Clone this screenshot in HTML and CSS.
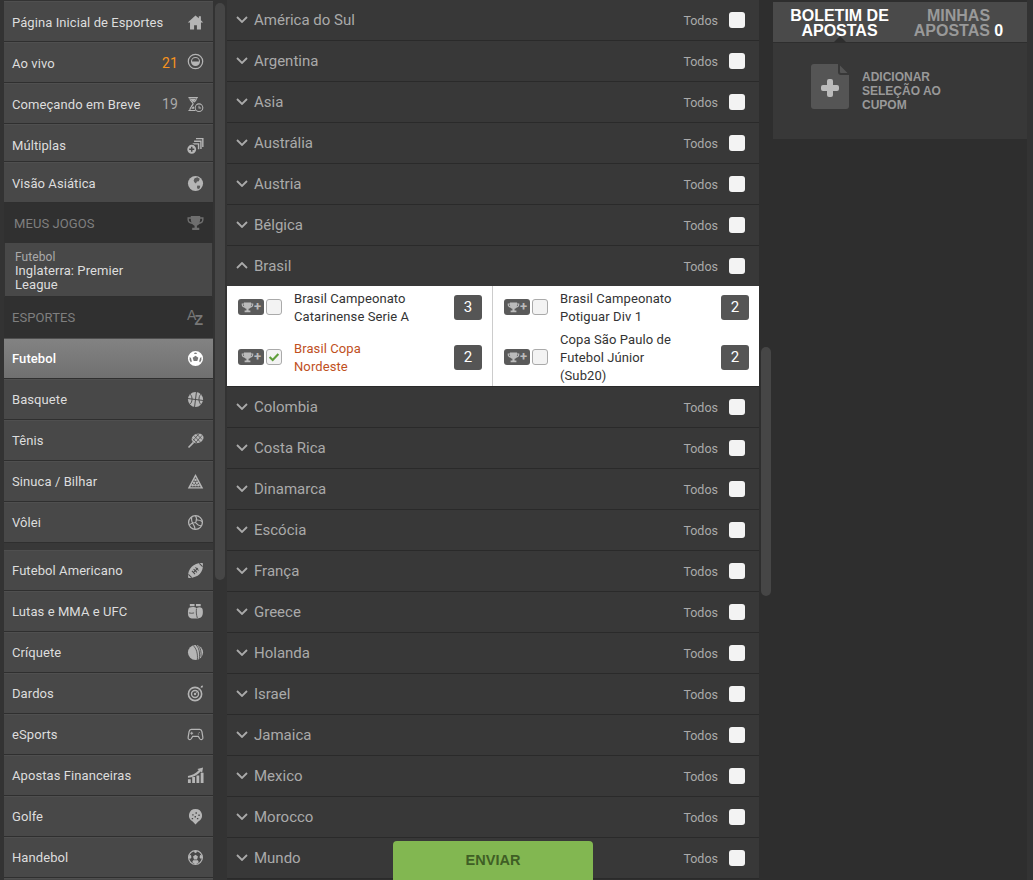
FILE: index.html
```html
<!DOCTYPE html>
<html lang="en">
<head>
  <meta charset="UTF-8" />
  <meta name="viewport" content="width=device-width, initial-scale=1.0" />
  <title>Apostas</title>
  <link rel="stylesheet" href="styles.css">
</head>
<body>
  <!-- Icon set -->
  <svg class="defs" width="0" height="0">
    <symbol id="i-home" viewBox="0 0 18 18"><path d="M9 1.500 .8 9h2.400v7.500h4.300v-4.500h3v4.500h4.300V9h2.400l-2.500-2.300V2.500h-2.200v2.100z"/></symbol>
    <symbol id="i-live" viewBox="0 0 18 18"><circle cx="9" cy="9" r="7.600" fill="none" stroke="currentColor" stroke-width="1.300"/><path fill-rule="evenodd" d="M9 4.200a4.800 4.800 0 1 0 0 9.600A4.800 4.800 0 0 0 9 4.200zm0 1.100A3.700 3.700 0 0 1 12.700 9H5.300A3.700 3.700 0 0 1 9 5.300z"/></symbol>
    <symbol id="i-soon" viewBox="0 0 18 18"><path d="M1.500 1h10v1.300h-10zM1.500 14.700h7.500V16H1.500z"/><path fill="none" stroke="currentColor" stroke-width="1.200" d="M3 2.300c0 3 3.500 4.200 3.500 6S3 11.700 3 14.700M10 2.300c0 2-1.500 3.200-2.500 4.300M6.500 8.300c-.5 1-1.500 2-2 3"/><path d="M3.800 3h5.400c-.3 1.500-1.800 2.600-2.700 3.500C5.600 5.600 4.100 4.500 3.800 3zM4.500 13.500c.5-1 1.300-2 2-2.700.4.400.8.800 1.100 1.300l-.2 1.400z"/><path fill-rule="evenodd" d="M12.700 7.800a4.600 4.600 0 1 0 0 9.200 4.600 4.600 0 0 0 0-9.200zm0 1.100a3.500 3.500 0 1 1 0 7 3.500 3.500 0 0 1 0-7zM12.200 10.300v2.900h2.700v-1h-1.700v-1.900z"/></symbol>
    <symbol id="i-multi" viewBox="0 0 18 18"><path d="M5.500 6.500h7.500v6.500h-1.500V8H7.500zM7.500 3.800h8v9h-1.500V5.300H7.500zM9.500 1h8v9.500H16V2.500H9.500z"/><path fill-rule="evenodd" d="M5 8.300a4.700 4.700 0 1 0 0 9.400 4.700 4.700 0 0 0 0-9.400zM4.200 10.300h1.600v1.900h1.900v1.600H5.800v1.900H4.200v-1.900H2.300v-1.600h1.900z"/></symbol>
    <symbol id="i-globe" viewBox="0 0 18 18"><circle cx="9" cy="9" r="8"/><path fill="#5a5a5a" d="M8 3.500l3-1 2.500 1.500-1 2.500-2 .5-1 2-1.500-1-1-2zM11 11l3 .5-.5 2.500-2 1-1-2z"/></symbol>
    <symbol id="i-trophy" viewBox="0 0 18 18"><path fill-rule="evenodd" d="M4 1h10v1.500h3.500V5c0 2.500-1.800 4.200-4.500 4.500-.700 1-1.500 1.500-2.500 1.800v2.200h2.500V16H5.500v-2.500H8v-2.200C7 11 6.200 10.500 5.500 9.500 2.500 9.200.5 7.500.5 5V2.500H4zM2 4v1c0 1.500 1 2.500 2.800 2.900C4.300 6.800 4 5.500 4 4zm12 0c0 1.500-.3 2.800-.8 3.900C15 7.500 16 6.500 16 5V4z"/></symbol>
    <symbol id="i-soccer" viewBox="0 0 18 18"><path fill-rule="evenodd" d="M9 1a8 8 0 1 0 0 16A8 8 0 0 0 9 1zm0 5 3 2.200-1.100 3.500H7.100L6 8.200zM2.800 7.500l1.400 1.100.9 3.200-.9 1.400A6.300 6.300 0 0 1 2.800 7.500zm12.400 0a6.300 6.300 0 0 1-1.400 5.700l-.9-1.400.9-3.200zM9 2.700l1.500.4v1L9 4.300l-1.500-.2v-1z"/></symbol>
    <symbol id="i-basket" viewBox="0 0 18 18"><circle cx="9" cy="9" r="8"/><path fill="none" stroke="#484848" stroke-width="1" d="M1 8l16 2M10 1 8 17M3.500 3.500C6 6 6 12 3 14M14.500 3.500C12 6 12 12 15 14.500"/></symbol>
    <symbol id="i-tennis" viewBox="0 0 18 18"><ellipse cx="11.200" cy="6.800" rx="6.400" ry="5" transform="rotate(-20 11.200 6.800)"/><path fill="none" stroke="#484848" stroke-width=".8" d="M7 3.500l7 7M9.500 1.500l6.500 6.500M6 7l5 5M13 1.500 6.500 9M16 3.500 9 11.500"/><path d="M6.200 10.200 7.600 11.600 2.200 17 1 15.800z"/></symbol>
    <symbol id="i-snooker" viewBox="0 0 18 18"><path fill-rule="evenodd" d="M9 1 .8 16.500h16.400zm0 3.200L14.500 15h-11z"/><circle cx="9" cy="7.500" r="1.300"/><circle cx="7.500" cy="10.300" r="1.300"/><circle cx="10.500" cy="10.300" r="1.300"/><circle cx="6" cy="13" r="1.300"/><circle cx="9" cy="13" r="1.300"/><circle cx="12" cy="13" r="1.300"/></symbol>
    <symbol id="i-volley" viewBox="0 0 18 18"><circle cx="9" cy="9" r="7.300" fill="none" stroke="currentColor" stroke-width="1.400"/><path fill="none" stroke="currentColor" stroke-width="1.200" d="M9 2c1.500 2.500 1.500 5 0 7-2.500 0-5 1-6.500 2.500M9 9c1.500 2 3.500 3.500 6.500 3.500M5 3c-.5 3 0 6 2 8.500 1 1.500 1.500 3 1.500 5M16 8c-2-1.500-4.500-2-7-1.500"/></symbol>
    <symbol id="i-football" viewBox="0 0 18 18"><path fill-rule="evenodd" d="M16.800 1.200c.6 4.300-.7 8.600-3.300 11.500-2.800 2.800-7.500 4.400-12.300 4.100C.7 12 2.200 7.700 5 5c2.900-2.800 7.400-4.300 11.800-3.800z"/><path fill="none" stroke="#484848" stroke-width="1.100" d="M6.500 11.500l5-5M7 7.500l3.500 3.500M9 5.800l3.200 3.200M5.200 9.500l3.300 3.300M13 1.500 16.500 5M1.500 13 5 16.500"/></symbol>
    <symbol id="i-gloves" viewBox="0 0 18 18"><path d="M3 1h5v2.500H3zM9.500 1h5v2.500h-5z"/><path d="M2 5c3-1 6.500-1 8 .5 2-1.500 4.500-1.500 6 0 1 1.500 1 5 .5 7-.5 2.500-3 4-5.500 3.800H5C2.500 16 1 14 1 11c0-2.500.2-4.500 1-6z"/><path fill="none" stroke="#484848" stroke-width=".9" d="M2 10.500c2 .5 4 .5 5.500 0M10 6c-.3 3-.3 6 1 10"/></symbol>
    <symbol id="i-cricket" viewBox="0 0 18 18"><circle cx="9" cy="9" r="8"/><path fill="none" stroke="#484848" stroke-width=".9" d="M9.500 1c3 3 4.500 7 3.500 15M12 1.500c2.500 3 3.300 7 2.800 12M6.500 1.500c3.500 3.500 5 8 4.500 15.300"/></symbol>
    <symbol id="i-target" viewBox="0 0 18 18"><circle cx="8.500" cy="9.500" r="7" fill="none" stroke="currentColor" stroke-width="1.700"/><circle cx="8.500" cy="9.500" r="3.700" fill="none" stroke="currentColor" stroke-width="1.500"/><circle cx="8.500" cy="9.500" r="1.300"/><path d="M8.500 9 14.500 3l.3-2 2.200-.5-.5 2.200-2 .3-5.500 6.500z"/></symbol>
    <symbol id="i-pad" viewBox="0 0 18 18"><path fill="none" stroke="currentColor" stroke-width="1.300" d="M4.500 3.500h9c1.500 0 2 1 2.300 2.500l1 6c.4 2.500-2.300 3-3.300 1.500L12 11H6l-1.500 2.500C3.500 15 .8 14.500 1.200 12l1-6C2.500 4.500 3 3.500 4.500 3.500z"/><path d="M4.500 6.200h1v1h1v1h-1v1h-1v-1h-1v-1h1zM12.500 6.500h1v1h-1zM11.500 8h1v1h-1z"/></symbol>
    <symbol id="i-chart" viewBox="0 0 18 18"><path d="M1 13h3v4H1zM5.500 10.500h3V17h-3zM10 9h3v8h-3zM14.500 6h3v11h-3z"/><path d="M1 9.500c4-.5 8-2.500 11.500-6L11 2 17 .5 16 6l-1.500-1.300C11 8.500 6 11 1 11.500z"/></symbol>
    <symbol id="i-golf" viewBox="0 0 18 18"><path fill-rule="evenodd" d="M9 1a7 7 0 0 1 3 13.300L9 17.500l-3-3.200A7 7 0 0 1 9 1z"/><path fill="#484848" d="M5.500 6.500h1.500V8H5.500zM9 4.500h1.500V6H9zM12 7h1.500v1.500H12zM8 8.500h1.500V10H8zM5 10.500h1.500V12H5zM10.500 10.500H12V12h-1.500z"/></symbol>
    <symbol id="i-hand" viewBox="0 0 18 18"><circle cx="9" cy="9" r="7.300" fill="none" stroke="currentColor" stroke-width="1.300"/><path d="M9 6l2.600 1.900-1 3.100H7.400l-1-3.100zM9 1.500l2 1.500L9 4.500 7 3zM2 7l2.200-.6.500 2.500-1.500 1.800L1.800 9.500zM16 7l-2.200-.6-.5 2.500 1.500 1.800 1-1.200zM5.500 14l1-2h5l1 2L9 16.500z"/></symbol>
    <symbol id="i-chev" viewBox="0 0 12 7"><path fill="none" stroke="currentColor" stroke-width="1.800" d="M1 1l5 5 5-5"/></symbol>
    <symbol id="i-cup" viewBox="0 0 18 18"><path fill-rule="evenodd" d="M4 2h10v1.500h3v1.800c0 2.200-1.600 3.600-4 3.900-.6.900-1.400 1.500-2.500 1.700V13H13v2.500H5V13h2.500v-2.100C6.400 10.700 5.600 10.100 5 9.200c-2.400-.3-4-1.700-4-3.900V3.500h3zM2.500 5c0 1.200.8 2 2 2.400C4.200 6.700 4 5.900 4 5zM14 5c0 .9-.2 1.700-.5 2.400 1.200-.4 2-1.200 2-2.400z"/></symbol>
  </svg>

  <div class="page">
    <!-- Left menu -->
    <div class="side">
      <nav class="menu">
        <a class="item item-top"><span class="name">Página Inicial de Esportes</span><svg class="ico"><use href="#i-home"/></svg></a>
        <a class="item item-top"><span class="name">Ao vivo</span><span class="num live">21</span><svg class="ico ico-up"><use href="#i-live"/></svg></a>
        <a class="item item-top"><span class="name">Começando em Breve</span><span class="num">19</span><svg class="ico"><use href="#i-soon"/></svg></a>
        <a class="item item-short"><span class="name">Múltiplas</span><svg class="ico"><use href="#i-multi"/></svg></a>
        <a class="item item-top"><span class="name">Visão Asiática</span><svg class="ico"><use href="#i-globe"/></svg></a>
        <div class="head"><span class="name">MEUS JOGOS</span><svg class="ico"><use href="#i-trophy"/></svg></div>
        <div class="fav">
          <small>Futebol</small>
          <span>Inglaterra: Premier League</span>
        </div>
        <div class="head head-sports"><span class="name">ESPORTES</span><span class="az"><span>A</span><span>Z</span></span></div>
        <a class="item active"><span class="name">Futebol</span><svg class="ico"><use href="#i-soccer"/></svg></a>
        <a class="item"><span class="name">Basquete</span><svg class="ico"><use href="#i-basket"/></svg></a>
        <a class="item"><span class="name">Tênis</span><svg class="ico"><use href="#i-tennis"/></svg></a>
        <a class="item"><span class="name">Sinuca / Bilhar</span><svg class="ico"><use href="#i-snooker"/></svg></a>
        <a class="item"><span class="name">Vôlei</span><svg class="ico"><use href="#i-volley"/></svg></a>
        <div class="gap"></div>
        <a class="item"><span class="name">Futebol Americano</span><svg class="ico"><use href="#i-football"/></svg></a>
        <a class="item"><span class="name">Lutas e MMA e UFC</span><svg class="ico"><use href="#i-gloves"/></svg></a>
        <a class="item"><span class="name">Críquete</span><svg class="ico"><use href="#i-cricket"/></svg></a>
        <a class="item"><span class="name">Dardos</span><svg class="ico"><use href="#i-target"/></svg></a>
        <a class="item"><span class="name">eSports</span><svg class="ico"><use href="#i-pad"/></svg></a>
        <a class="item"><span class="name">Apostas Financeiras</span><svg class="ico"><use href="#i-chart"/></svg></a>
        <a class="item"><span class="name">Golfe</span><svg class="ico"><use href="#i-golf"/></svg></a>
        <a class="item"><span class="name">Handebol</span><svg class="ico"><use href="#i-hand"/></svg></a>
        <a class="item"></a>
      </nav>
      <div class="track"><div class="thumb thumb-menu"></div></div>
    </div>

    <!-- Country list -->
    <main class="list">
      <div class="row"><svg class="chev"><use href="#i-chev"/></svg><span class="country">América do Sul</span><span class="all">Todos</span><span class="box"></span></div>
      <div class="row"><svg class="chev"><use href="#i-chev"/></svg><span class="country">Argentina</span><span class="all">Todos</span><span class="box"></span></div>
      <div class="row"><svg class="chev"><use href="#i-chev"/></svg><span class="country">Asia</span><span class="all">Todos</span><span class="box"></span></div>
      <div class="row"><svg class="chev"><use href="#i-chev"/></svg><span class="country">Austrália</span><span class="all">Todos</span><span class="box"></span></div>
      <div class="row"><svg class="chev"><use href="#i-chev"/></svg><span class="country">Austria</span><span class="all">Todos</span><span class="box"></span></div>
      <div class="row"><svg class="chev"><use href="#i-chev"/></svg><span class="country">Bélgica</span><span class="all">Todos</span><span class="box"></span></div>
      <div class="row row-open"><svg class="chev chev-up"><use href="#i-chev"/></svg><span class="country">Brasil</span><span class="all">Todos</span><span class="box"></span></div>

      <div class="leagues">
        <div class="league">
          <span class="cup"><svg><use href="#i-cup"/></svg><b>+</b></span><span class="box box-line"></span>
          <span class="league-name">Brasil Campeonato Catarinense Serie A</span>
          <span class="count">3</span>
        </div>
        <div class="league league-right">
          <span class="cup"><svg><use href="#i-cup"/></svg><b>+</b></span><span class="box box-line"></span>
          <span class="league-name">Brasil Campeonato Potiguar Div 1</span>
          <span class="count">2</span>
        </div>
        <div class="league">
          <span class="cup"><svg><use href="#i-cup"/></svg><b>+</b></span>
          <span class="box box-line"><svg viewBox="0 0 16 16"><path fill="none" stroke="#5f9e3a" stroke-width="2.400" d="M3 8l3.500 3.500L13 4.500"/></svg></span>
          <span class="league-name picked">Brasil Copa Nordeste</span>
          <span class="count">2</span>
        </div>
        <div class="league league-right">
          <span class="cup"><svg><use href="#i-cup"/></svg><b>+</b></span><span class="box box-line"></span>
          <span class="league-name">Copa São Paulo de Futebol Júnior (Sub20)</span>
          <span class="count">2</span>
        </div>
      </div>

      <div class="row"><svg class="chev"><use href="#i-chev"/></svg><span class="country">Colombia</span><span class="all">Todos</span><span class="box"></span></div>
      <div class="row"><svg class="chev"><use href="#i-chev"/></svg><span class="country">Costa Rica</span><span class="all">Todos</span><span class="box"></span></div>
      <div class="row"><svg class="chev"><use href="#i-chev"/></svg><span class="country">Dinamarca</span><span class="all">Todos</span><span class="box"></span></div>
      <div class="row"><svg class="chev"><use href="#i-chev"/></svg><span class="country">Escócia</span><span class="all">Todos</span><span class="box"></span></div>
      <div class="row"><svg class="chev"><use href="#i-chev"/></svg><span class="country">França</span><span class="all">Todos</span><span class="box"></span></div>
      <div class="row"><svg class="chev"><use href="#i-chev"/></svg><span class="country">Greece</span><span class="all">Todos</span><span class="box"></span></div>
      <div class="row"><svg class="chev"><use href="#i-chev"/></svg><span class="country">Holanda</span><span class="all">Todos</span><span class="box"></span></div>
      <div class="row"><svg class="chev"><use href="#i-chev"/></svg><span class="country">Israel</span><span class="all">Todos</span><span class="box"></span></div>
      <div class="row"><svg class="chev"><use href="#i-chev"/></svg><span class="country">Jamaica</span><span class="all">Todos</span><span class="box"></span></div>
      <div class="row"><svg class="chev"><use href="#i-chev"/></svg><span class="country">Mexico</span><span class="all">Todos</span><span class="box"></span></div>
      <div class="row"><svg class="chev"><use href="#i-chev"/></svg><span class="country">Morocco</span><span class="all">Todos</span><span class="box"></span></div>
      <div class="row"><svg class="chev"><use href="#i-chev"/></svg><span class="country">Mundo</span><span class="all">Todos</span><span class="box"></span></div>
    </main>
    <div class="track"><div class="thumb thumb-list"></div></div>

    <!-- Bet slip -->
    <aside class="slip">
      <div class="tabs">
        <div class="tab tab-on">BOLETIM DE APOSTAS</div>
        <div class="tab tab-mine">MINHAS APOSTAS <b>0</b></div>
      </div>
      <div class="slip-body">
        <svg class="doc" viewBox="0 0 38 45">
          <path fill="#555" d="M3 0h24l11 11v31a3 3 0 0 1-3 3H3a3 3 0 0 1-3-3V3a3 3 0 0 1 3-3z"/>
          <path fill="#383838" d="M27 0v8a3 3 0 0 0 3 3h8v-1.500L28.500 0z"/>
          <path fill="#555" d="M29 1.500 36.500 9H30a1 1 0 0 1-1-1z"/>
          <path fill="#bbb" d="M16 17a2 2 0 0 1 2-2h2a2 2 0 0 1 2 2v4h4a2 2 0 0 1 2 2v2a2 2 0 0 1-2 2h-4v4a2 2 0 0 1-2 2h-2a2 2 0 0 1-2-2v-4h-4a2 2 0 0 1-2-2v-2a2 2 0 0 1 2-2h4z"/>
        </svg>
        <p class="slip-text">ADICIONAR SELEÇÃO AO CUPOM</p>
      </div>
    </aside>
    <div class="edge"></div>
  </div>

  <button class="send">ENVIAR</button>
</body>
</html>
```

FILE: styles.css
```css
body {
  margin: 0;
  height: 880px;
  overflow: hidden;
  background-color: #2e2e2e;
  font-family: Roboto, "Liberation Sans", Arial, sans-serif;
  font-size: 13px;
}
.defs {
  display: block;
  position: absolute;
}
.page {
  display: flex;
  align-items: flex-start;
  height: 880px;
  overflow: hidden;
}
.side {
  display: flex;
  align-items: flex-start;
  width: 227px;
  height: 880px;
  flex: none;
  background-color: #333;
  overflow: hidden;
}
.edge {
  flex: 1;
  align-self: stretch;
  background-color: #333;
}

/* Left menu */
.menu {
  width: 209px;
  margin: 1px 0 0 4px;
  flex: none;
  letter-spacing: 0.08px;
}
.item,
.head {
  display: flex;
  align-items: center;
  box-sizing: border-box;
  height: 41px;
  padding: 0 9px 0 8px;
}
.item {
  background-color: #484848;
  border-bottom: 1px solid #2f2f2f;
  box-shadow: inset 0 1px 0 #4f4f4f;
  color: #ddd;
}
.item-top {
  padding-top: 2px;
}
.item-short {
  height: 38px;
  padding-top: 5px;
}
.item.active {
  background: linear-gradient(#838383, #707070);
  color: #fff;
  font-weight: 500;
}
.name {
  flex: 1;
}
.num {
  font-size: 14px;
  color: #aaa;
  margin-right: 9px;
}
.num.live {
  color: #f7931e;
}
.ico {
  width: 17px;
  height: 17px;
  flex: none;
  fill: currentColor;
  color: #b5b5b5;
}
.ico-up {
  margin-bottom: 3px;
}
.active .ico {
  color: #fff;
}
.head {
  height: 40px;
  background-color: #303030;
  color: #7f7f7f;
  padding-left: 10px;
}
.head .ico {
  color: #6e6e6e;
}
.head-sports {
  height: 41px;
  padding-left: 8px;
}
.az {
  display: flex;
  height: 17px;
  width: 17px;
  color: #777;
  font-family: "Liberation Sans", Arial, sans-serif;
  font-size: 14px;
  line-height: 12px;
  margin-bottom: 1px;
}
.az span:last-child {
  align-self: flex-end;
  margin-left: -2px;
  font-weight: bold;
}
.fav {
  box-sizing: border-box;
  height: 54px;
  margin: 0 1px;
  padding: 7px 10px 0;
  background-color: #484848;
  border-bottom: 1px solid #2f2f2f;
  color: #ddd;
  line-height: 14px;
}
.fav small {
  display: block;
  font-size: 12px;
  color: #aaa;
}
.fav span {
  display: block;
  width: 140px;
}
.gap {
  height: 7px;
  background-color: #383838;
}

/* Scrollbars */
.track {
  width: 10px;
  margin: 0 2px;
  flex: none;
}
.thumb {
  width: 10px;
  background-color: #464646;
  border-radius: 5px;
}
.thumb-menu {
  height: 577px;
  margin-top: 3px;
}
.thumb-list {
  height: 249px;
  margin-top: 347px;
}

/* Country list */
.list {
  width: 532px;
  flex: none;
}
.row {
  display: flex;
  align-items: center;
  box-sizing: border-box;
  height: 41px;
  padding: 0 14px 1px 9px;
  background-color: #383838;
  border-bottom: 1px solid #2a2a2a;
  color: #aaa;
}
.row-open {
  height: 40px;
  border-bottom: none;
}
.chev {
  width: 12px;
  height: 7px;
  color: #aaa;
}
.chev-up {
  transform: rotate(180deg);
}
.country {
  flex: 1;
  margin-left: 6px;
  font-size: 15px;
}
.all {
  margin: 2px 11px 0 0;
  font-size: 12.5px;
}
.box {
  display: block;
  box-sizing: border-box;
  width: 16px;
  height: 16px;
  flex: none;
  background-color: #f3f3f3;
  border-radius: 3px;
}
.box-line {
  border: 1px solid #aaa;
}
.box-line svg {
  display: block;
  width: 14px;
  height: 14px;
}

/* Leagues inside the open country */
.leagues {
  display: grid;
  grid-template-columns: 265px 267px;
  grid-auto-rows: 50px;
  background-color: #fff;
  border-bottom: 1px solid #2a2a2a;
}
.league {
  display: flex;
  align-items: center;
  box-sizing: border-box;
  height: 50px;
  padding: 0 10px 8px 11px;
  color: #333;
  line-height: 18px;
  letter-spacing: 0.1px;
}
.league-right {
  border-left: 1px solid #ccc;
}
.cup {
  display: flex;
  align-items: center;
  justify-content: center;
  width: 26px;
  height: 16px;
  margin-right: 2px;
  flex: none;
  background-color: #5a5a5a;
  border-radius: 3px;
  color: #bbb;
}
.cup svg {
  width: 13px;
  height: 13px;
  fill: currentColor;
}
.cup b {
  font-size: 13px;
  line-height: 12px;
}
.league-name {
  flex: none;
  width: 121px;
  margin: 2px 0 0 12px;
}
.count {
  width: 28px;
  height: 25px;
  margin-left: auto;
  flex: none;
  background-color: #555;
  border-radius: 3px;
  color: #fff;
  font-size: 15px;
  line-height: 25px;
  text-align: center;
}
.picked {
  color: #c0501e;
}

/* Bet slip */
.slip {
  width: 254px;
  margin-top: 2px;
  flex: none;
  background-color: #383838;
}
.tabs {
  display: flex;
  height: 41px;
  box-sizing: border-box;
  background-color: #4a4a4a;
  border-bottom: 1px solid #2e2e2e;
  font-family: "Liberation Sans", Arial, sans-serif;
  font-size: 16px;
  font-weight: bold;
  line-height: 15px;
  text-align: center;
}
.tab {
  position: relative;
  width: 133px;
  padding: 6px 12px 0;
  box-sizing: border-box;
  color: #999;
}
.tab b {
  color: #fff;
}
.tab-on {
  color: #fff;
}
.tab-mine {
  width: 105px;
  padding: 6px 2px 0;
}
.tab-on::after {
  content: "";
  position: absolute;
  left: 61px;
  bottom: 0;
  border: 6px solid transparent;
  border-top: none;
  border-bottom-color: #2e2e2e;
}
.slip-body {
  display: flex;
  align-items: flex-start;
  height: 96px;
  box-sizing: border-box;
  padding: 21px 0 0 38px;
}
.doc {
  width: 38px;
  height: 45px;
  flex: none;
}
.slip-text {
  width: 100px;
  margin: 6px 0 0 13px;
  color: #999;
  font-family: "Liberation Sans", Arial, sans-serif;
  font-size: 12px;
  font-weight: bold;
  line-height: 14px;
}

/* Floating submit button */
.send {
  position: fixed;
  left: 393px;
  bottom: 0;
  width: 200px;
  height: 39px;
  padding: 0 0 2px;
  background-color: #82b751;
  border: none;
  border-radius: 4px 4px 0 0;
  color: #3f5f25;
  font-family: "Liberation Sans", Arial, sans-serif;
  font-size: 14.5px;
  font-weight: bold;
}
```
